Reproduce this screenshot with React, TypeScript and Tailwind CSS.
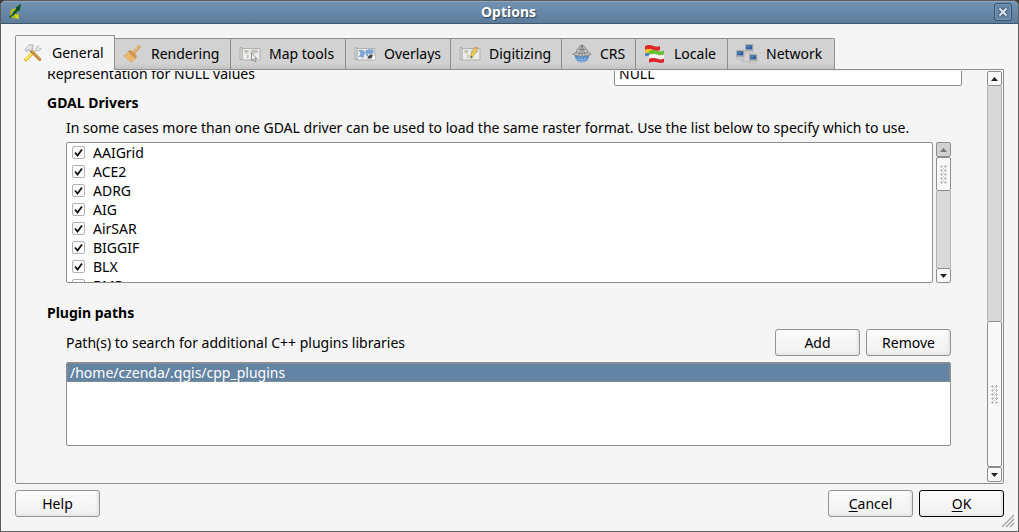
import { useState, type ReactNode } from "react";

const drivers = ["AAIGrid", "ACE2", "ADRG", "AIG", "AirSAR", "BIGGIF", "BLX", "BMP"];

function QgisLogo() {
  return (
    <svg viewBox="0 0 16 16" className="size-4 shrink-0" aria-hidden="true">
      <path d="M8.500 5.500c-3-.5-4.500 1.200-4.300 3.700s1.500 4.300 3.500 4.300 3.300-1.700 3.300-4" fill="none" stroke="#b9c400" strokeWidth="2" />
      <path d="M7.500 10l4 4.500" stroke="#dede10" strokeWidth="2" />
      <path d="M13.500.5 9 4l.8.8-3.600 5 1 .8 3.600-4.600 1.200.8z" fill="#0c5a1c" stroke="#07420f" strokeWidth=".8" />
      <path d="M2.500 13.500 7 9.500" stroke="#0c5a1c" strokeWidth="1.500" />
    </svg>
  );
}

function ToolsIcon() {
  return (
    <svg viewBox="0 0 20 20" className="size-[18px] shrink-0" aria-hidden="true">
      <path d="M2 17.500 9 10.500" stroke="#dcc040" strokeWidth="3.800" strokeLinecap="round" />
      <path d="M2 17 9 10" stroke="#f8e668" strokeWidth="2" strokeLinecap="round" />
      <path d="M9 10.500 15 5" stroke="#b0b0b0" strokeWidth="2.200" />
      <path d="M9 10.500 15 5" stroke="#eee" strokeWidth="1.200" />
      <path d="M14 6.500c-1-2 0-4 2-4.500l-.5 2 1.500 1.200 2-.7c0 2-2 3.500-4 3z" fill="#ececec" stroke="#a8a8a8" strokeWidth=".7" />
      <path d="m7 6.500 10.500 10.500" stroke="#b9812f" strokeWidth="3.400" strokeLinecap="round" />
      <path d="m8 6.800 9.500 9.500" stroke="#dca857" strokeWidth="1.400" strokeLinecap="round" />
      <path d="M1 6.500 5.500 1.500c2-1 4-.7 5.500.3L9 3l.7 2.500-3.200 3L5 6.500 3 8.500z" fill="#dcdcdc" stroke="#9a9a9a" strokeWidth=".8" />
      <path d="m3 6 3-3.200 2-.4" fill="none" stroke="#fff" strokeWidth="1" />
    </svg>
  );
}

function BrushIcon() {
  return (
    <svg viewBox="0 0 20 20" className="size-[18px] shrink-0" aria-hidden="true">
      <path d="m11.500 9 6.500-7" stroke="#cf9344" strokeWidth="3.200" strokeLinecap="round" />
      <path d="m11.500 8.500 6.500-6.800" stroke="#efbf78" strokeWidth="1.600" strokeLinecap="round" />
      <path d="m6 7 2.500-.8L15 12l-1.500 3z" fill="#d9994a" stroke="#bb7c30" strokeWidth=".7" />
      <path d="m5.500 8 7.800 6.800-4 4.700L.8 12C3 11.500 4.500 10 5.500 8z" fill="#eebb70" stroke="#d9a252" strokeWidth=".7" />
      <path d="m3.500 12.500 3-2M5.500 14.500 9 12M8 16.500l3-3" stroke="#dba458" strokeWidth=".8" />
    </svg>
  );
}

function MapSheet({ land, children }: { land: string; children?: ReactNode }) {
  return (
    <svg viewBox="0 0 22 18" className="h-[18px] w-[22px] shrink-0" aria-hidden="true">
      <path d="M3 3.500h18v11.500H3z" fill="#ececea" stroke="#b0b0ae" />
      <path d="M1 2.500h2v12H1z" fill="#ddd" stroke="#a4a4a4" strokeWidth=".8" />
      <path d="M4.500 5h4.500l1 1-2 2.500-1.500.2-1-2zM8 9.500l2 .8-.8 3H8zM11.500 5.500l3-1 4.500.5v2l-2.500 1.500-2-.5-.5 3-1.500.5-.8-3.500z" fill={land} />
      {children}
    </svg>
  );
}

function MapToolsIcon() {
  return (
    <MapSheet land="#bfc3b8">
      <path d="M12.500 8v7.500l1.700-1.500 1.300 2.900 1.400-.7-1.300-2.700h2.300z" fill="#f4f4f4" stroke="#868686" strokeWidth=".9" />
    </MapSheet>
  );
}

function OverlaysIcon() {
  return (
    <MapSheet land="#7fa5d2">
      <path d="m4.500 12 3.500-5.500h4L9.500 12zM14 4.500h5.500v3.500l-4 2z" fill="#7fa6d6" />
      <path d="M13.500 13.500c0-2.500 2-4 5.500-4l-1.500 4z" fill="#484848" />
      <path d="m17 14.500 4-4v4z" fill="#fff" />
    </MapSheet>
  );
}

function DigitizingIcon() {
  return (
    <MapSheet land="#bfc3b8">
      <path d="m12.800 11 4.700-8" stroke="#bf9a30" strokeWidth="3.400" />
      <path d="m12.800 11 4.700-8" stroke="#f3cf48" strokeWidth="2.200" />
      <path d="m17.200 3.500.8-1.400" stroke="#d98a7a" strokeWidth="2.800" />
      <path d="m11.300 10.300 2.800 1.600-2.600 1.800z" fill="#75664a" />
    </MapSheet>
  );
}

function GlobeIcon() {
  return (
    <svg viewBox="0 0 20 20" className="size-5 shrink-0" aria-hidden="true">
      <circle cx="10" cy="11.500" r="7.200" fill="#5188c8" />
      <path d="M4 8.500C5 5 7 2 10 1c3 1 5 4 6 7.500l3.200 1.700c-5 2.800-13.400 2.800-18.400 0z" fill="#c4c4c4" stroke="#777" strokeWidth=".7" />
      <path d="M10 1v11M6 5c2.500.9 5.500.9 8 0M4 8.500c3.500 1.300 8.500 1.300 12 0M10 1 6.500 12M10 1l3.500 11" fill="none" stroke="#666" strokeWidth=".6" />
      <path d="M10 12.500v6M6.500 12.500c.3 2.500 1.200 4.500 3.500 6 2.300-1.500 3.200-3.500 3.500-6M3.500 14.500c4 1.300 9 1.300 13 0M5.500 17c3 .8 6 .8 9 0" fill="none" stroke="#a9c8ea" strokeWidth=".6" />
    </svg>
  );
}

function FlagsIcon() {
  return (
    <svg viewBox="0 0 20 20" className="size-5 shrink-0" aria-hidden="true">
      <path d="M1 2c3-1.500 6-1 8.500 0s4.500.8 6.500 0v4c-2 .8-4 1-6.500 0S4 4.500 1 6z" fill="#dd2626" />
      <path d="M1 6c3-1.500 5-1 8 0v3.500C6 8.500 4 8.500 1 9.500z" fill="#f2c81e" />
      <path d="M1 9.500c2-.8 3.500-.8 5-.4v3c-1.500-.5-3-.3-5 .5z" fill="#4d7fc4" />
      <path d="M5 6.800c3-1.300 6-1 8.500 0s4.500.6 6.500-.3v4c-2 .8-4 1-6.500 0S8 9.500 5 10.800z" fill="#6abf30" />
      <path d="M5 10.800c3-1.300 6-1 8.500 0s4.500.6 6.500-.3v4c-2 .8-4 1-6.500 0S8 13.500 5 14.800z" fill="#f4f4f4" />
      <path d="M5 14.800c3-1.300 6-1 8.500 0s4.500.6 6.500-.3v3.800c-2 .8-4 1-6.500 0S8 17.500 5 18.800z" fill="#d9262c" />
    </svg>
  );
}

function Computer({ x, y }: { x: number; y: number }) {
  return (
    <g transform={`translate(${x} ${y})`}>
      <path d="M.5.5h7.500v6H.5z" fill="#d2d2ce" stroke="#a2a29e" strokeWidth=".8" />
      <path d="M1.200 1.200h6.100v4.300H1.200z" fill="#2f5d9c" />
      <path d="M1.200 1.200h6.100L3 4.800H1.200z" fill="#4776b3" />
      <path d="M1 7.200h6.500l.6 1.800H.4z" fill="#e0e0da" stroke="#a8a8a2" strokeWidth=".6" />
    </g>
  );
}

function NetworkIcon() {
  return (
    <svg viewBox="0 0 22 20" className="h-5 w-[22px] shrink-0" aria-hidden="true">
      <path d="M4 16h3v2h7M14 9v2" fill="none" stroke="#b5b5b5" />
      <Computer x={9} y={0} />
      <Computer x={0} y={6} />
      <Computer x={13} y={10} />
    </svg>
  );
}

const tabs = [
  { name: "General", icon: <ToolsIcon />, layout: "w-[100px] gap-2.5 pl-2" },
  { name: "Rendering", icon: <BrushIcon />, layout: "w-[116px] gap-2.5 pl-2" },
  { name: "Map tools", icon: <MapToolsIcon />, layout: "w-[115px] gap-2 pl-2" },
  { name: "Overlays", icon: <OverlaysIcon />, layout: "w-[105px] gap-2 pl-2" },
  { name: "Digitizing", icon: <DigitizingIcon />, layout: "w-[111px] gap-2 pl-2" },
  { name: "CRS", icon: <GlobeIcon />, layout: "w-[74px] gap-2 pl-2.5" },
  { name: "Locale", icon: <FlagsIcon />, layout: "w-[92px] gap-2.5 pl-2" },
  { name: "Network", icon: <NetworkIcon />, layout: "w-[107px] gap-2 pl-2" },
];

function Grip() {
  return (
    <svg viewBox="0 0 7 19" className="h-[19px] w-[7px]" aria-hidden="true">
      {[0, 4, 8, 12, 16].map((y) => (
        <path
          key={y}
          d={`M0 ${y + 1.5}h3M1.500 ${y}v3M4 ${y + 1.5}h3M5.500 ${y}v3${y < 16 ? `M3 ${y + 3.5}h1` : ""}`}
          stroke="#bdbdbd"
          strokeWidth="1"
        />
      ))}
    </svg>
  );
}

function ScrollBar({ atTop, thumb }: { atTop?: boolean; thumb: string }) {
  const handle = (
    <div className={`flex w-full items-center justify-center rounded-xs border border-[#8e8e8e] bg-[#f8f8f8] ${thumb}`}>
      <Grip />
    </div>
  );
  const arrow = "flex h-[15px] w-full shrink-0 items-center justify-center rounded-xs border border-[#8e8e8e]";
  return (
    <div className="flex w-[15px] shrink-0 flex-col">
      <button type="button" aria-label="Scroll up" className={`${arrow} ${atTop ? "bg-[#d0d0d0]" : "bg-[#f8f8f8]"}`}>
        <svg viewBox="0 0 7 4" className="h-1 w-[7px]">
          <path d="M3.500 0 7 4H0z" fill={atTop ? "#777" : "#222"} />
        </svg>
      </button>
      {atTop && handle}
      <div className="flex-1 border-x border-[#b4b4b4] bg-[#d8d8d8]" />
      {!atTop && handle}
      <button type="button" aria-label="Scroll down" className={`${arrow} bg-[#f8f8f8]`}>
        <svg viewBox="0 0 7 4" className="h-1 w-[7px]">
          <path d="M0 0h7L3.500 4z" fill="#222" />
        </svg>
      </button>
    </div>
  );
}

function Button({ children, primary }: { children: ReactNode; primary?: boolean }) {
  return (
    <button
      type="button"
      className={`h-[27px] w-[85px] rounded-[3px] border bg-linear-to-b from-[#fbfbfb] to-[#f1f1f1] shadow-[inset_-2px_-2px_2px_#e6e6e6] ${primary ? "border-black" : "border-[#929292]"}`}
    >
      {children}
    </button>
  );
}

function DriverRow({ name }: { name: string }) {
  const [checked, setChecked] = useState(true);
  return (
    <li>
      <label className="flex h-[19px] items-center gap-2">
        <span className="grid size-[13px] place-items-center">
          <input
            type="checkbox"
            checked={checked}
            onChange={() => setChecked(!checked)}
            className="peer col-start-1 row-start-1 size-[13px] appearance-none rounded-xs border border-[#b2b2b2] bg-white"
          />
          <svg viewBox="0 0 13 13" className="pointer-events-none invisible col-start-1 row-start-1 size-[13px] peer-checked:visible">
            <path d="m3 6.500 2.500 3 4.500-6" fill="none" stroke="#111" strokeWidth="1.800" />
          </svg>
        </span>
        {name}
      </label>
    </li>
  );
}

export default function App() {
  const [active, setActive] = useState("General");
  return (
    <div className="h-screen bg-[#3d3d3d]">
      <div className="flex h-full flex-col overflow-hidden rounded-t-md border border-[#5c5c5c] bg-[#f5f5f5] font-['Noto_Sans',sans-serif] text-sm leading-5 whitespace-nowrap text-black">
        <header className="flex h-[23px] shrink-0 items-center border-b border-[#3f566d] bg-linear-to-b from-[#7393b2] to-[#5c7c9c] px-1.5 inset-shadow-[0_1px_0_#88a4bf]">
          <QgisLogo />
          <h1 className="flex-1 text-center font-bold text-white text-shadow-[1px_1px_1px_#2f4358]">Options</h1>
          <button type="button" aria-label="Close" className="grid size-[18px] place-items-center rounded-[3px] border border-[#39516a] bg-[#6585a5] shadow-[inset_0_0_0_1px_#7a98b5]">
            <svg viewBox="0 0 10 10" className="size-2.5">
              <path d="m1.500 1.500 7 7m0-7-7 7" stroke="#34495f" strokeWidth="3.600" />
              <path d="m1.500 1.500 7 7m0-7-7 7" stroke="#dfe8f0" strokeWidth="2.200" />
            </svg>
          </button>
        </header>

        <main className="flex min-h-0 flex-1 flex-col px-3.5 pt-[11px] pb-3.5">
          <div role="tablist" className="z-10 flex shrink-0 items-end">
            {tabs.map((tab) => (
              <button
                key={tab.name}
                type="button"
                role="tab"
                aria-selected={active === tab.name}
                onClick={() => setActive(tab.name)}
                className={`flex shrink-0 items-center border-t border-r border-[#8e8e8e] first:rounded-tl-xs first:border-l last:rounded-tr-xs ${tab.layout} ${
                  active === tab.name ? "-mb-px h-[35px] bg-[#f5f5f5]" : "h-[31px] bg-linear-to-b from-[#d2d2d2] from-80% to-[#c4c4c4]"
                }`}
              >
                {tab.icon}
                {tab.name}
              </button>
            ))}
          </div>

          <div role="tabpanel" className="flex min-h-0 flex-1 rounded-b-xs border border-[#8e8e8e] p-px">
            <div className="flex min-w-0 flex-1 flex-col justify-end overflow-hidden pr-9 pb-9 pl-[30px]">
              <div className="mr-[-11px] flex h-[25px] shrink-0 items-center justify-between">
                <label htmlFor="null-value">Representation for NULL values</label>
                <input id="null-value" defaultValue="NULL" className="h-[25px] w-[348px] rounded-xs border border-[#8e8e8e] bg-white px-1" />
              </div>
              <h2 className="mt-[7px] shrink-0 font-bold">GDAL Drivers</h2>
              <p className="mt-[5px] shrink-0 pl-[19px]">
                In some cases more than one GDAL driver can be used to load the same raster format. Use the list below to specify which to use.
              </p>
              <div className="mt-1 flex h-[141px] shrink-0 gap-[3px] pl-[19px]">
                <ul className="flex-1 overflow-hidden rounded-xs border border-[#8e8e8e] bg-white px-[5px]">
                  {drivers.map((name) => (
                    <DriverRow key={name} name={name} />
                  ))}
                </ul>
                <ScrollBar atTop thumb="h-[34px]" />
              </div>
              <h2 className="mt-5 shrink-0 font-bold">Plugin paths</h2>
              <div className="mt-1.5 flex shrink-0 items-center gap-1.5 pl-[19px]">
                <p className="flex-1">Path(s) to search for additional C++ plugins libraries</p>
                <Button>Add</Button>
                <Button>Remove</Button>
              </div>
              <ul className="mt-1.5 ml-[19px] h-[84px] shrink-0 rounded-xs border border-[#8e8e8e] bg-white">
                <li className="h-[19px] border border-dotted border-[#9a938c] bg-[#6484a4] px-0.5 leading-[18px] text-white">/home/czenda/.qgis/cpp_plugins</li>
              </ul>
            </div>
            <ScrollBar thumb="h-[146px]" />
          </div>

          <footer className="mt-1.5 flex shrink-0 gap-1.5">
            <div className="flex-1">
              <Button>Help</Button>
            </div>
            <Button>
              <span className="underline underline-offset-2">C</span>ancel
            </Button>
            <Button primary>
              <span className="underline underline-offset-2">O</span>K
            </Button>
          </footer>
        </main>
        <svg viewBox="0 0 14 14" className="absolute right-1 bottom-1 size-3.5" aria-hidden="true">
          <path d="M1 13 13 1M5 13l8-8M9 13l4-4" stroke="#a0a0a0" strokeWidth="1.200" />
        </svg>
      </div>
    </div>
  );
}
